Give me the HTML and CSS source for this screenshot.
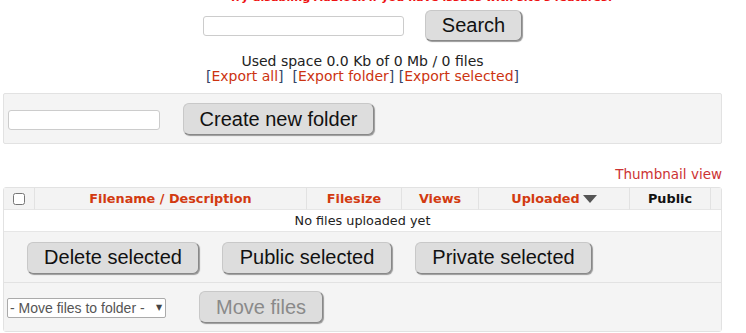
FILE: index.html
```html
<!DOCTYPE html>
<html lang="en">
<head>
    <meta charset="UTF-8">
    <meta name="viewport" content="width=device-width, initial-scale=1.0">
    <title>My files</title>

    <link rel="stylesheet" href="styles.css">
</head>
<body>
    <div class="container">
        <p class="notice">Try disabling AdBlock if you have issues with site's features!</p>

        <form class="search-form">
            <input type="text" class="search-input">
            <button type="submit" class="btn">Search</button>
        </form>

        <div class="usage">
            <div>Used space 0.0 Kb of 0 Mb / 0 files</div>
            <div>[<a href="#">Export all</a>]&nbsp; [<a href="#">Export folder</a>] [<a href="#">Export selected</a>]</div>
        </div>

        <form class="folder-box">
            <input type="text" class="folder-input">
            <button type="submit" class="btn">Create new folder</button>
        </form>

        <div class="view-switch">
            <a href="#">Thumbnail view</a>
        </div>

        <table class="files">
            <thead>
                <tr>
                    <th class="col-check"><input type="checkbox"></th>
                    <th class="col-name"><a href="#">Filename / Description</a></th>
                    <th class="col-size"><a href="#">Filesize</a></th>
                    <th class="col-views"><a href="#">Views</a></th>
                    <th class="col-date"><a href="#">Uploaded</a><span class="sort-arrow"></span></th>
                    <th class="col-public">Public</th>
                    <th class="col-end"></th>
                </tr>
            </thead>
            <tbody>
                <tr class="empty-row">
                    <td colspan="7">No files uploaded yet</td>
                </tr>
                <tr class="actions-row">
                    <td colspan="7">
                        <div class="actions">
                            <button class="btn">Delete selected</button>
                            <button class="btn">Public selected</button>
                            <button class="btn">Private selected</button>
                        </div>
                    </td>
                </tr>
                <tr class="move-row">
                    <td colspan="7">
                        <div class="move">
                            <div class="select-wrap">
                                <select class="folder-select">
                                    <option>- Move files to folder -</option>
                                </select>
                                <span class="select-arrow">&#9660;</span>
                            </div>
                            <button class="btn" disabled>Move files</button>
                        </div>
                    </td>
                </tr>
            </tbody>
        </table>
    </div>
</body>
</html>
```

FILE: styles.css
```css
body {
    margin: 0;
    padding: 0 3px;
    font-family: "DejaVu Sans", Verdana, sans-serif;
    font-size: 12px;
    color: #222;
    background: #fff;
    overflow: hidden;
}

a {
    color: #cc3311;
    text-decoration: none;
}

.container {
    width: 719px;
}

/* Top notice (scrolled partly out of view) */
.notice {
    margin: -8px 0 0;
    padding-left: 117px;
    text-align: center;
    font-weight: bold;
    font-size: 11.2px;
    line-height: 12px;
    color: #ee1111;
}

/* Search */
.search-form {
    display: flex;
    justify-content: center;
    align-items: center;
    gap: 21px;
    margin-top: 6px;
}

.search-input {
    width: 201px;
    height: 20px;
    box-sizing: border-box;
    border: 1px solid #ccc;
    border-radius: 3px;
    padding: 2px 4px;
}

.btn {
    font-family: "Liberation Sans", Arial, sans-serif;
    font-size: 20px;
    color: #111;
    background: #dddddd;
    border: 1px solid #c8c8c8;
    border-right-color: #888;
    border-bottom-color: #888;
    border-radius: 6px;
    box-shadow: 1px 1px 1px #999;
    height: 32px;
    padding: 0 16px;
    cursor: pointer;
}

.btn:disabled {
    color: #8a8a8a;
    cursor: default;
}

.search-form .btn {
    width: 97px;
    height: 31px;
    padding: 0;
}

/* Usage */
.usage {
    text-align: center;
    font-size: 14px;
    line-height: 15px;
    margin-top: 13px;
    color: #222;
}

.usage div + div {
    color: #334466;
}

/* Folder box */
.folder-box {
    display: flex;
    align-items: center;
    gap: 23px;
    margin-top: 9px;
    height: 49px;
    padding: 0 4px;
    background: #f4f4f4;
    border: 1px solid #e2e2e2;
    border-radius: 2px;
}

.folder-input {
    width: 152px;
    height: 20px;
    box-sizing: border-box;
    border: 1px solid #ccc;
    border-radius: 3px;
    margin-top: 2px;
}

.folder-box .btn {
    width: 191px;
    height: 32px;
    padding: 0;
    margin-top: 1px;
}

/* View switch */
.view-switch {
    text-align: right;
    margin-top: 22px;
    font-size: 13.5px;
    line-height: 16px;
}

.view-switch a {
    color: #cc3333;
}

/* File table */
.files {
    width: 719px;
    margin-top: 5px;
    border-collapse: separate;
    border-spacing: 0;
    border: 1px solid #e2e2e2;
    border-radius: 3px;
    table-layout: fixed;
}

.files th {
    height: 21px;
    padding: 0;
    background: #f3f3f3;
    border-left: 1px solid #e2e2e2;
    border-bottom: 1px solid #e6e6e6;
    font-size: 12.8px;
    font-weight: bold;
    color: #111;
    text-align: center;
}

.files th:first-child {
    border-left: none;
}

.files th a {
    color: #d23a10;
}

.col-check { width: 30px; }
.col-name { width: 271px; }
.col-size { width: 94px; }
.col-views { width: 76px; }
.col-date { width: 150px; }
.col-public { width: 80px; }

.col-check input {
    width: 12px;
    height: 12px;
    margin: 3px 0 0;
}

.sort-arrow {
    display: inline-block;
    margin-left: 3px;
    width: 0;
    height: 0;
    border-left: 7px solid transparent;
    border-right: 7px solid transparent;
    border-top: 8px solid #555;
    vertical-align: 0;
}

.empty-row td {
    height: 21px;
    padding: 0;
    text-align: center;
    font-size: 12.8px;
    background: #fff;
    border-bottom: 1px solid #e6e6e6;
}

.actions-row td,
.move-row td {
    padding: 0;
    background: #f4f4f4;
}

.actions-row td {
    border-bottom: 1px solid #e2e2e2;
}

.actions {
    display: flex;
    align-items: center;
    gap: 23px;
    height: 50px;
    padding-left: 23px;
}

.actions .btn:nth-child(1) { width: 172px; }
.actions .btn:nth-child(2) { width: 170px; }
.actions .btn:nth-child(3) { width: 177px; }
.actions .btn { padding: 0; margin-top: 1px; }

.move {
    display: flex;
    align-items: center;
    gap: 33px;
    height: 48px;
    padding-left: 3px;
}

.select-wrap {
    position: relative;
    margin-top: 2px;
}

.folder-select {
    display: block;
    width: 159px;
    height: 20px;
    padding: 0 0 0 2px;
    appearance: none;
    -webkit-appearance: none;
    font-family: "Liberation Sans", Arial, sans-serif;
    font-size: 14px;
    color: #555;
    background: #fff;
    border: 1px solid #aaa;
    border-radius: 2px;
}

.select-arrow {
    position: absolute;
    left: 149px;
    top: 5px;
    font-size: 8px;
    line-height: 10px;
    color: #444;
    pointer-events: none;
}

.move .btn {
    width: 124px;
    padding: 0;
}
```
